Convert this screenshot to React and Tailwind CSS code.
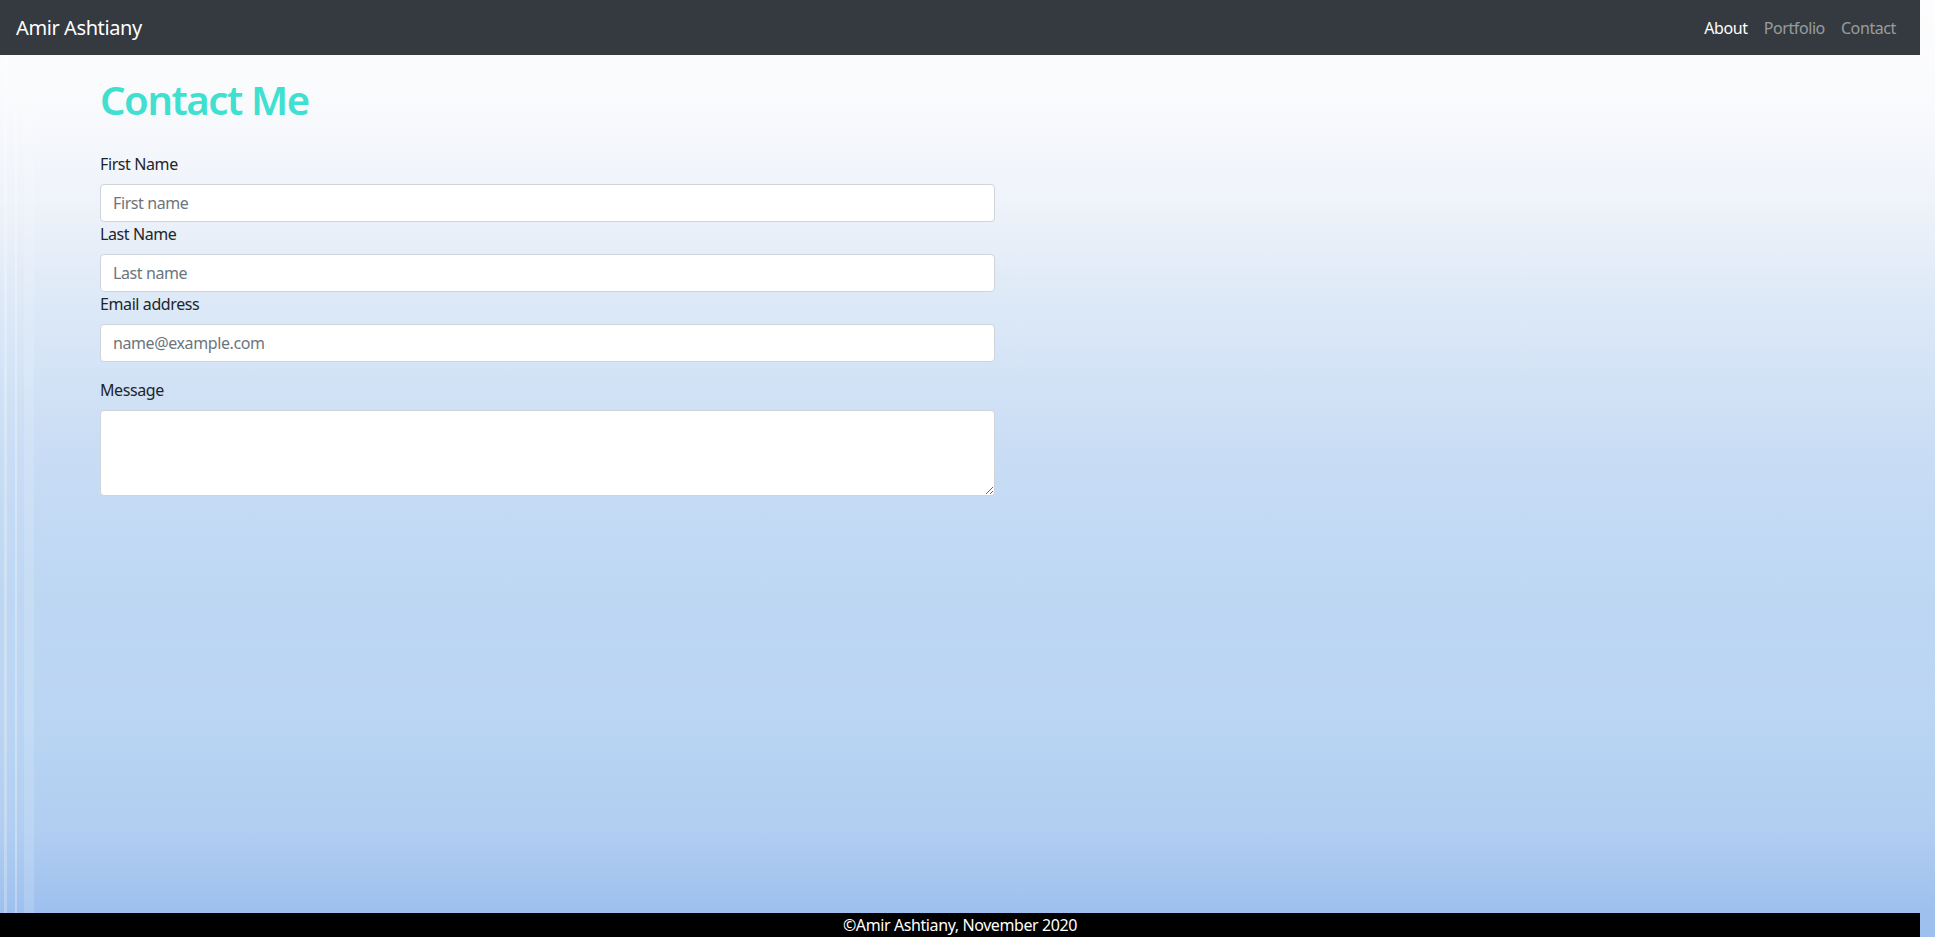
import { useState } from 'react';

function Field({ label, placeholder, type = 'text', value, onChange }) {
  return (
    <div>
      <label className="block text-base leading-6 mb-2 text-[#212529]">{label}</label>
      <input
        type={type}
        value={value}
        onChange={onChange}
        placeholder={placeholder}
        className="block w-full h-[38px] px-3 text-base text-[#495057] bg-white border border-[#ced4da] rounded placeholder:text-[#6c757d] outline-none"
      />
    </div>
  );
}

export default function App() {
  const [form, setForm] = useState({ first: '', last: '', email: '', message: '' });
  const update = (key) => (e) => setForm(prev => ({ ...prev, [key]: e.target.value }));

  return (
    <div
      className="relative min-h-screen w-full flex flex-col tracking-[-0.025em] bg-[linear-gradient(180deg,#fdfdfe_0px,#fafbfd_90px,#eff3fa_200px,#dde9f7_300px,#c8dcf5_460px,#bdd7f3_600px,#bad5f3_720px,#b1cef1_830px,#9dc0ee_913px)]"
      style={{ fontFamily: '"Noto Sans", "Open Sans", sans-serif' }}
    >
      {/* faint stripes on the left edge of the background */}
      <div className="absolute left-[4px] top-[55px] bottom-6 w-[3px] bg-white/25" />
      <div className="absolute left-[15px] top-[55px] bottom-6 w-[2px] bg-white/30" />
      <div className="absolute left-[24px] top-[55px] bottom-6 w-[10px] bg-white/15" />

      <nav className="relative w-[1920px] h-[55px] bg-[#343a40] flex items-center justify-between px-4">
        <span className="text-xl text-white">Amir Ashtiany</span>
        <ul className="flex items-center">
          <li><a className="px-2 text-base text-white" href="#about">About</a></li>
          <li><a className="px-2 text-base text-white/50" href="#portfolio">Portfolio</a></li>
          <li><a className="px-2 text-base text-white/50" href="#contact">Contact</a></li>
        </ul>
      </nav>

      <main className="relative flex-1 pl-[100px]">
        <h1 className="mt-[21px] mb-[28px] text-[40px] leading-[48px] font-semibold tracking-[-0.035em] text-[#40e0d0]">Contact Me</h1>
        <form className="w-[895px]" onSubmit={(e) => e.preventDefault()}>
          <Field label="First Name" placeholder="First name" value={form.first} onChange={update('first')} />
          <Field label="Last Name" placeholder="Last name" value={form.last} onChange={update('last')} />
          <div className="mb-4">
            <Field label="Email address" type="email" placeholder="name@example.com" value={form.email} onChange={update('email')} />
          </div>
          <label className="block text-base leading-6 mb-2 text-[#212529]">Message</label>
          <textarea
            rows={3}
            value={form.message}
            onChange={update('message')}
            className="block w-full h-[86px] px-3 py-1.5 text-base bg-white border border-[#ced4da] rounded outline-none"
          />
        </form>
      </main>

      <footer className="relative w-[1920px] h-6 bg-black text-white text-base leading-6 text-center">
        ©Amir Ashtiany, November 2020
      </footer>
    </div>
  );
}
